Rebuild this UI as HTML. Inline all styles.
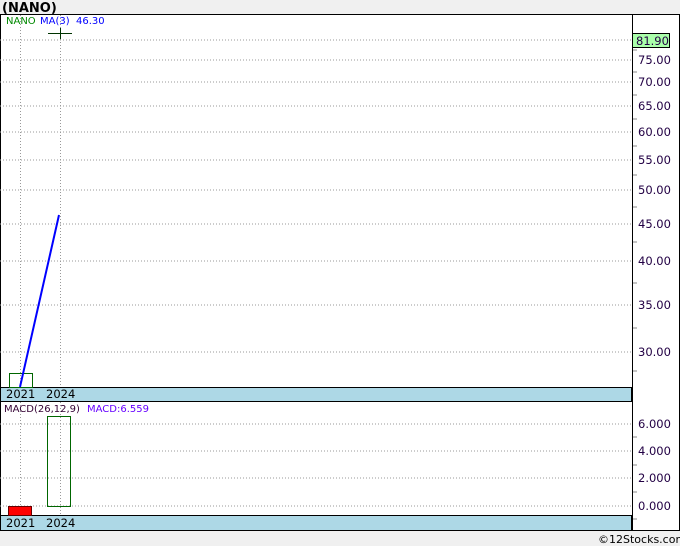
<html><head><style>body{margin:0;background:#f0f0f0;width:680px;height:546px;overflow:hidden}svg text{font-family:"DejaVu Sans","Liberation Sans",sans-serif}</style></head><body>
<svg width="680" height="546" xmlns="http://www.w3.org/2000/svg">
<rect width="680" height="546" fill="#f0f0f0"/>
<text x="2" y="12" font-size="13" font-weight="bold" font-family="Liberation Sans,sans-serif">(NANO)</text>
<rect x="0.5" y="14.5" width="679" height="516" fill="#fff" stroke="#000"/>
<g stroke="#999" stroke-dasharray="1,2">
<line x1="0" y1="40" x2="632" y2="40"/><line x1="0" y1="60" x2="632" y2="60"/><line x1="0" y1="82" x2="632" y2="82"/><line x1="0" y1="106" x2="632" y2="106"/><line x1="0" y1="132" x2="632" y2="132"/><line x1="0" y1="160" x2="632" y2="160"/><line x1="0" y1="190" x2="632" y2="190"/><line x1="0" y1="224" x2="632" y2="224"/><line x1="0" y1="261" x2="632" y2="261"/><line x1="0" y1="305" x2="632" y2="305"/><line x1="0" y1="352" x2="632" y2="352"/>
<line x1="20.5" y1="15" x2="20.5" y2="387"/><line x1="60.5" y1="15" x2="60.5" y2="387"/>
<line x1="0" y1="424" x2="632" y2="424"/><line x1="0" y1="451" x2="632" y2="451"/><line x1="0" y1="478" x2="632" y2="478"/><line x1="0" y1="506" x2="632" y2="506"/>
<line x1="20.5" y1="402" x2="20.5" y2="515"/><line x1="60.5" y1="402" x2="60.5" y2="515"/>
</g>
<g stroke="#888"><line x1="632" y1="50" x2="637" y2="50"/><line x1="632" y1="72" x2="637" y2="72"/><line x1="632" y1="95" x2="637" y2="95"/><line x1="632" y1="119" x2="637" y2="119"/><line x1="632" y1="146" x2="637" y2="146"/><line x1="632" y1="175" x2="637" y2="175"/><line x1="632" y1="207" x2="637" y2="207"/><line x1="632" y1="242" x2="637" y2="242"/><line x1="632" y1="283" x2="637" y2="283"/><line x1="632" y1="328" x2="637" y2="328"/><line x1="632" y1="371" x2="637" y2="371"/>
<line x1="632" y1="437" x2="637" y2="437"/><line x1="632" y1="465" x2="637" y2="465"/><line x1="632" y1="492" x2="637" y2="492"/><line x1="632" y1="519" x2="637" y2="519"/></g>
<rect x="0.5" y="387.5" width="631" height="14" fill="#add8e6" stroke="#000"/>
<rect x="0.5" y="515.5" width="631" height="15" fill="#add8e6" stroke="#000"/>
<line x1="632.5" y1="14" x2="632.5" y2="531" stroke="#000"/>
<rect x="9.5" y="373.5" width="23" height="14" fill="none" stroke="#060"/>
<line x1="20" y1="387" x2="59" y2="215" stroke="#00f" stroke-width="2"/>
<line x1="48" y1="33.5" x2="72" y2="33.5" stroke="#030"/><line x1="60.5" y1="28" x2="60.5" y2="39" stroke="#030"/>
<rect x="47.5" y="416.5" width="23" height="90" fill="none" stroke="#060"/>
<rect x="8.5" y="506.5" width="23" height="9" fill="#f00" stroke="#600"/>
<g font-size="10"><text x="6" y="24" fill="#080">NANO</text><text x="40" y="24" fill="#00f">MA(3)</text><text x="76" y="24" fill="#00f">46.30</text>
<text x="4" y="412" fill="#303">MACD(26,12,9)</text><text x="87" y="412" fill="#60f">MACD:6.559</text></g>
<rect x="632.5" y="33.5" width="37" height="14" fill="#afa" stroke="#000"/>
<g font-size="11.5" fill="#204"><text x="636" y="45">81.90</text><text x="638" y="64">75.00</text><text x="638" y="86">70.00</text><text x="638" y="110">65.00</text><text x="638" y="136">60.00</text><text x="638" y="164">55.00</text><text x="638" y="194">50.00</text><text x="638" y="228">45.00</text><text x="638" y="265">40.00</text><text x="638" y="309">35.00</text><text x="638" y="356">30.00</text>
<text x="638" y="428">6.000</text><text x="638" y="455">4.000</text><text x="638" y="482">2.000</text><text x="638" y="510">0.000</text></g>
<g font-size="11.5" fill="#000"><text x="6" y="398">2021</text><text x="46" y="398">2024</text><text x="6" y="527">2021</text><text x="46" y="527">2024</text>
<text x="598" y="543" font-size="11">©12Stocks.com</text></g>
</svg></body></html>
